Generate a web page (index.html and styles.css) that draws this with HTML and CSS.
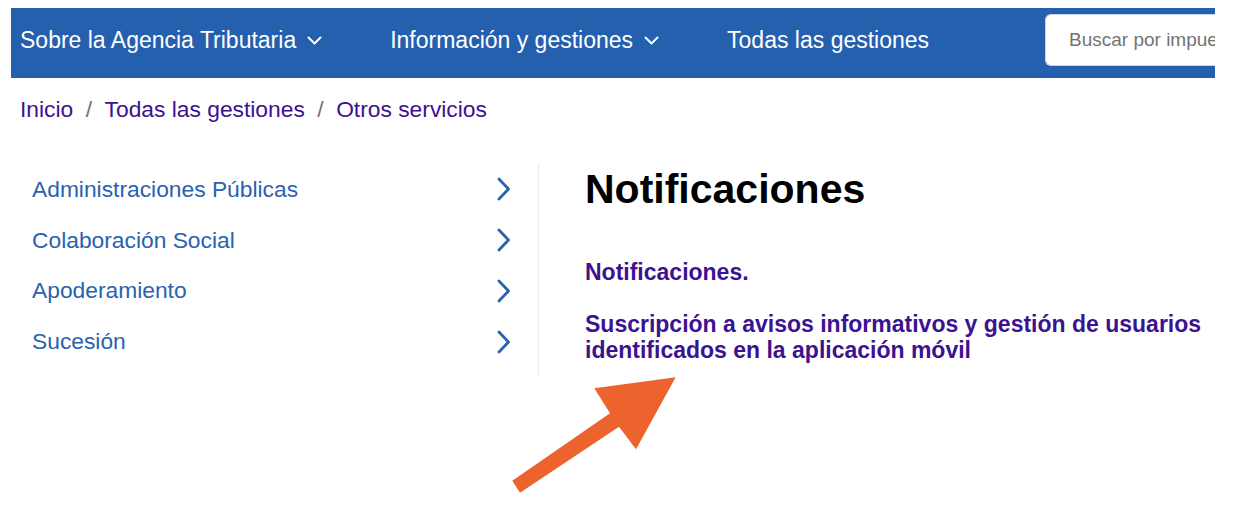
FILE: index.html
```html
<!DOCTYPE html>
<html lang="es">
<head>
<meta charset="utf-8">
<title>Notificaciones</title>
<link rel="stylesheet" href="styles.css">
</head>
<body>
<div class="page">
  <nav class="topnav">
    <a class="nav-item" href="#">Sobre la Agencia Tributaria
      <svg class="nav-chev" viewBox="0 0 15 9" width="15" height="9"><path d="M1.5 1.5 L7.5 7.5 L13.5 1.5" fill="none" stroke="#fff" stroke-width="2" stroke-linecap="round" stroke-linejoin="round"/></svg>
    </a>
    <a class="nav-item" href="#">Información y gestiones
      <svg class="nav-chev" viewBox="0 0 15 9" width="15" height="9"><path d="M1.5 1.5 L7.5 7.5 L13.5 1.5" fill="none" stroke="#fff" stroke-width="2" stroke-linecap="round" stroke-linejoin="round"/></svg>
    </a>
    <a class="nav-item" href="#">Todas las gestiones</a>
    <input class="search" type="text" placeholder="Buscar por impuesto, trámite o palabra clave">
  </nav>

  <div class="breadcrumb">
    <a href="#">Inicio</a><span class="sep">/</span><a href="#">Todas las gestiones</a><span class="sep">/</span><a href="#">Otros servicios</a>
  </div>

  <div class="layout">
    <aside class="sidebar">
      <a class="side-item" href="#"><span>Administraciones Públicas</span>
        <svg class="side-chev" viewBox="0 0 14 24" width="14" height="24"><path d="M2 2 L11.5 12 L2 22" fill="none" stroke="#2a62b0" stroke-width="2.8" stroke-linecap="round" stroke-linejoin="round"/></svg>
      </a>
      <a class="side-item" href="#"><span>Colaboración Social</span>
        <svg class="side-chev" viewBox="0 0 14 24" width="14" height="24"><path d="M2 2 L11.5 12 L2 22" fill="none" stroke="#2a62b0" stroke-width="2.8" stroke-linecap="round" stroke-linejoin="round"/></svg>
      </a>
      <a class="side-item" href="#"><span>Apoderamiento</span>
        <svg class="side-chev" viewBox="0 0 14 24" width="14" height="24"><path d="M2 2 L11.5 12 L2 22" fill="none" stroke="#2a62b0" stroke-width="2.8" stroke-linecap="round" stroke-linejoin="round"/></svg>
      </a>
      <a class="side-item" href="#"><span>Sucesión</span>
        <svg class="side-chev" viewBox="0 0 14 24" width="14" height="24"><path d="M2 2 L11.5 12 L2 22" fill="none" stroke="#2a62b0" stroke-width="2.8" stroke-linecap="round" stroke-linejoin="round"/></svg>
      </a>
    </aside>

    <main class="content">
      <h1 class="title">Notificaciones</h1>
      <a class="content-link first" href="#">Notificaciones.</a>
      <a class="content-link" href="#">Suscripción a avisos informativos y gestión de usuarios identificados en la aplicación móvil</a>
    </main>
  </div>
</div>

<svg class="arrow" viewBox="0 0 1246 514" width="1246" height="514">
  <polygon points="520,492.7 512.3,480.7 610,413.3 594.3,388.3 675.7,377.3 636,449.3 619,426.7" fill="#ec632d"/>
</svg>
</body>
</html>
```

FILE: styles.css
```css
html, body {
  margin: 0;
  padding: 0;
  background: #fff;
}

body {
  position: relative;
  font-family: "Liberation Sans", Arial, sans-serif;
  width: 1246px;
  height: 514px;
  overflow: hidden;
}

a {
  text-decoration: none;
}

.page {
  padding-top: 8px;
  margin-left: 11px;
  width: 1204px;
}

.topnav {
  display: flex;
  align-items: center;
  height: 52px;
  padding: 6px 0 12px 9px;
  background: #2560af;
  overflow: hidden;
}

.nav-item {
  display: flex;
  align-items: center;
  color: #fff;
  font-size: 23px;
  white-space: nowrap;
  margin-right: 68px;
}

.nav-chev {
  margin-left: 11px;
  margin-top: 1px;
}

.search {
  margin-left: auto;
  flex: 0 0 auto;
  box-sizing: border-box;
  width: 170px;
  height: 52px;
  border: 1px solid #c6d5ec;
  border-right: none;
  border-radius: 6px 0 0 6px;
  background: #fff;
  padding: 0 0 0 23px;
  font-family: "Liberation Sans", Arial, sans-serif;
  font-size: 19px;
  color: #333;
  outline: none;
}

.search::placeholder {
  color: #737373;
  opacity: 1;
}

.breadcrumb {
  margin-top: 14px;
  padding-left: 9px;
  font-size: 22.8px;
  line-height: 34px;
  white-space: nowrap;
}

.breadcrumb a {
  color: #3b1290;
}

.breadcrumb .sep {
  color: #6c757d;
  padding: 0 12.5px;
}

.layout {
  display: flex;
  margin-top: 38px;
}

.sidebar {
  box-sizing: border-box;
  width: 519px;
  flex: 0 0 519px;
  margin-left: 9px;
  padding: 0 28px 10px 12px;
  border-right: 1px solid #e4ebf3;
  display: flex;
  flex-direction: column;
}

.side-item {
  display: flex;
  align-items: center;
  justify-content: space-between;
  height: 50.75px;
  color: #2a62b0;
  font-size: 22.8px;
}

.side-chev {
  display: block;
  margin-right: -1px;
}

.content {
  flex: 1;
  padding-left: 46px;
  display: flex;
  flex-direction: column;
  align-items: flex-start;
}

.title {
  margin: 0;
  font-size: 41px;
  line-height: 50px;
  font-weight: bold;
  color: #000;
}

.content-link {
  display: block;
  color: #3b1290;
  font-weight: bold;
  font-size: 23px;
  line-height: 26.7px;
  margin-top: 25px;
}

.content-link.first {
  margin-top: 45px;
}

.arrow {
  position: absolute;
  left: 0;
  top: 0;
  pointer-events: none;
}
```
